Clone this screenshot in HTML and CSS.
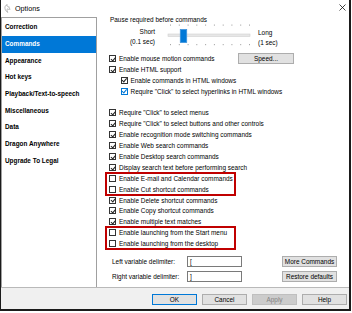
FILE: index.html
```html
<!DOCTYPE html>
<html lang="en">
<head>
  <meta charset="UTF-8" />
  <title>Options</title>
  <link rel="stylesheet" href="styles.css">
</head>
<body>
  <div class="window">
    <div class="titlebar">
      <svg class="app-icon" width="7" height="9" viewBox="0 0 7 9">
        <path d="M3.2 0.6 C1.4 1.2 0.6 2.8 1 4.6 C1.3 6.2 2.4 7.6 3.8 8.4 C3 7 2.8 5.8 3.4 4.8 C4 5.4 5 5.6 6.2 5.2 C5.4 4.6 5 3.8 5.2 2.8 C4.2 3 3.4 2.6 3 1.8 Z" fill="none" stroke="#9a9a9a" stroke-width="0.7"/>
      </svg>
      <span class="title">Options</span>
      <svg class="close" width="7" height="7" viewBox="0 0 7 7">
        <path d="M0.5 0.5 6.5 6.5 M6.5 0.5 0.5 6.5" stroke="#111" stroke-width="0.8"/>
      </svg>
    </div>

    <div class="main">
      <ul class="nav">
        <li>Correction</li>
        <li class="active">Commands</li>
        <li>Appearance</li>
        <li>Hot keys</li>
        <li>Playback/Text-to-speech</li>
        <li>Miscellaneous</li>
        <li>Data</li>
        <li>Dragon Anywhere</li>
        <li>Upgrade To Legal</li>
      </ul>

      <div class="panel">
        <div class="pause">Pause required before commands</div>

        <div class="slider">
          <div class="slider-label left">Short<br>(0.1 sec)</div>
          <svg class="track" width="86" height="24" viewBox="0 0 86 24">
            <g fill="#a8a8a8">
              <rect x="4" y="1.5" width="1" height="1.2"/><rect x="12.8" y="1.5" width="1" height="1.2"/>
              <rect x="21.6" y="1.5" width="1" height="1.2"/><rect x="30.3" y="1.5" width="1" height="1.2"/>
              <rect x="39.1" y="1.5" width="1" height="1.2"/><rect x="47.9" y="1.5" width="1" height="1.2"/>
              <rect x="56.7" y="1.5" width="1" height="1.2"/><rect x="65.4" y="1.5" width="1" height="1.2"/>
              <rect x="74.2" y="1.5" width="1" height="1.2"/><rect x="83" y="1.5" width="1" height="1.2"/>
              <rect x="4" y="21" width="1" height="1.2"/><rect x="12.8" y="21" width="1" height="1.2"/>
              <rect x="21.6" y="21" width="1" height="1.2"/><rect x="30.3" y="21" width="1" height="1.2"/>
              <rect x="39.1" y="21" width="1" height="1.2"/><rect x="47.9" y="21" width="1" height="1.2"/>
              <rect x="56.7" y="21" width="1" height="1.2"/><rect x="65.4" y="21" width="1" height="1.2"/>
              <rect x="74.2" y="21" width="1" height="1.2"/><rect x="83" y="21" width="1" height="1.2"/>
            </g>
            <rect x="2" y="11" width="82" height="2.4" fill="#e7e7e7" stroke="#d0d0d0" stroke-width="0.6"/>
            <rect x="14.3" y="6.5" width="6.4" height="13" fill="#0078d7" stroke="#3d93dd" stroke-width="0.8"/>
          </svg>
          <div class="slider-label right">Long<br>(1 sec)</div>
        </div>

        <div class="options">
          <div class="row">
            <label class="check wide"><span class="box on"></span>Enable mouse motion commands</label>
            <button class="btn speed">Speed...</button>
          </div>
          <div class="row"><span class="box on"></span>Enable HTML support</div>
          <div class="row sub"><span class="box on"></span>Enable commands in HTML windows</div>
          <div class="row sub"><span class="box on hover"></span>Require "Click" to select hyperlinks in HTML windows</div>
          <div class="row"></div>
          <div class="row"><span class="box on"></span>Require "Click" to select menus</div>
          <div class="row"><span class="box on"></span>Require "Click" to select buttons and other controls</div>
          <div class="row"><span class="box on"></span>Enable recognition mode switching commands</div>
          <div class="row"><span class="box on"></span>Enable Web search commands</div>
          <div class="row"><span class="box on"></span>Enable Desktop search commands</div>
          <div class="row"><span class="box on"></span>Display search text before performing search</div>
          <div class="marked">
            <div class="row"><span class="box"></span>Enable E-mail and Calendar commands</div>
            <div class="row"><span class="box"></span>Enable Cut shortcut commands</div>
          </div>
          <div class="row"><span class="box on"></span>Enable Delete shortcut commands</div>
          <div class="row"><span class="box on"></span>Enable Copy shortcut commands</div>
          <div class="row"><span class="box on"></span>Enable multiple text matches</div>
          <div class="marked">
            <div class="row"><span class="box"></span>Enable launching from the Start menu</div>
            <div class="row"><span class="box"></span>Enable launching from the desktop</div>
          </div>
        </div>

        <div class="delims">
          <div class="delim-row">
            <span class="delim-label">Left variable delimiter:</span>
            <span class="field">[</span>
            <button class="btn side">More Commands</button>
          </div>
          <div class="delim-row">
            <span class="delim-label">Right variable delimiter:</span>
            <span class="field">]</span>
            <button class="btn side">Restore defaults</button>
          </div>
        </div>
      </div>
    </div>

    <div class="footer">
      <button class="btn default">OK</button>
      <button class="btn">Cancel</button>
      <button class="btn disabled">Apply</button>
      <button class="btn">Help</button>
    </div>
  </div>
</body>
</html>
```

FILE: styles.css
```css
* {
  margin: 0;
  padding: 0;
  box-sizing: border-box;
}

body {
  font-family: 'Liberation Sans', Arial, sans-serif;
  font-size: 6.45px;
  color: #000;
  background: #fff;
}

.window {
  width: 351px;
  height: 311px;
  border-left: 1px solid #1b1b1b;
  border-right: 2px solid #1b1b1b;
  border-bottom: 2px solid #1b1b1b;
  background: #fff;
  display: flex;
  flex-direction: column;
}

/* title bar */
.titlebar {
  height: 17px;
  display: flex;
  align-items: center;
  flex: none;
}

.app-icon {
  margin-left: 3px;
  margin-top: -1px;
}

.title {
  margin-left: 4px;
  font-size: 7.2px;
  margin-top: -1px;
}

.close {
  margin-left: auto;
  margin-right: 3.5px;
  margin-top: -2px;
}

/* body */
.main {
  height: 270px;
  display: flex;
  flex: none;
}

.nav {
  list-style: none;
  width: 96px;
  flex: none;
  border-top: 1px solid #a0a0a0;
  border-left: 1px solid #a0a0a0;
  border-right: 1px solid #a0a0a0;
  padding-top: 1.4px;
}

.nav li {
  height: 16.67px;
  line-height: 16.67px;
  padding-left: 3px;
  font-size: 6.4px;
  font-weight: bold;
  white-space: nowrap;
}

.nav li.active {
  background: #0078d7;
  color: #fff;
}

.panel {
  flex: 1;
  padding-left: 11px;
}

.pause {
  height: 6px;
  line-height: 6px;
  padding-left: 2px;
}

.slider {
  height: 24px;
  display: flex;
}

.slider-label {
  line-height: 10px;
  white-space: nowrap;
}

.slider-label.left {
  width: 47px;
  text-align: right;
  padding-top: 3.7px;
}

.slider-label.right {
  margin-left: 6px;
  padding-top: 4.7px;
}

.track {
  margin-left: 11px;
  flex: none;
}

.options {
  margin-top: 5.85px;
}

.row {
  display: flex;
  align-items: center;
  height: 10.92px;
  white-space: nowrap;
}

.check {
  display: flex;
  align-items: center;
}

.check.wide {
  width: 130px;
  flex: none;
}

.box {
  width: 7px;
  height: 7px;
  border: 1px solid #333;
  background: #fff;
  margin: 0 3px 0 1px;
  position: relative;
  flex: none;
}

.box.on::after {
  content: '';
  position: absolute;
  left: 1.7px;
  top: -0.2px;
  width: 1.6px;
  height: 3.6px;
  border: solid #222;
  border-width: 0 1px 1px 0;
  transform: rotate(40deg);
}

.box.hover,
.box.hover::after {
  border-color: #0078d7;
}

.row.sub .box {
  margin-left: 12.5px;
}

.marked {
  width: 129px;
  margin-left: -2px;
  padding-left: 2px;
  outline: 2px solid #c00000;
  outline-offset: -1px;
}

.btn {
  font-family: inherit;
  font-size: 6.45px;
  color: #000;
  background: #e1e1e1;
  border: 1px solid #adadad;
  height: 11px;
  flex: none;
}

.btn.speed {
  width: 56px;
}

.delims {
  margin-top: 4.6px;
}

.delim-row {
  display: flex;
  align-items: center;
  height: 15px;
}

.delim-label {
  width: 79px;
  padding-left: 4px;
  white-space: nowrap;
}

.field {
  width: 55px;
  height: 11px;
  border: 1px solid #7a7a7a;
  padding-left: 2px;
  line-height: 9px;
}

.btn.side {
  width: 55px;
  margin-left: 40px;
}

/* footer */
.footer {
  flex: 1;
  background: #f0f0f0;
  border-top: 1px solid #b9b9b9;
  display: flex;
  justify-content: flex-end;
  align-items: flex-start;
  gap: 5px;
  padding: 6px 2px 0 0;
}

.footer .btn {
  width: 45px;
}

.btn.default {
  border-color: #0078d7;
}

.btn.disabled {
  background: #cccccc;
  border-color: #bfbfbf;
  color: #838383;
}
```
